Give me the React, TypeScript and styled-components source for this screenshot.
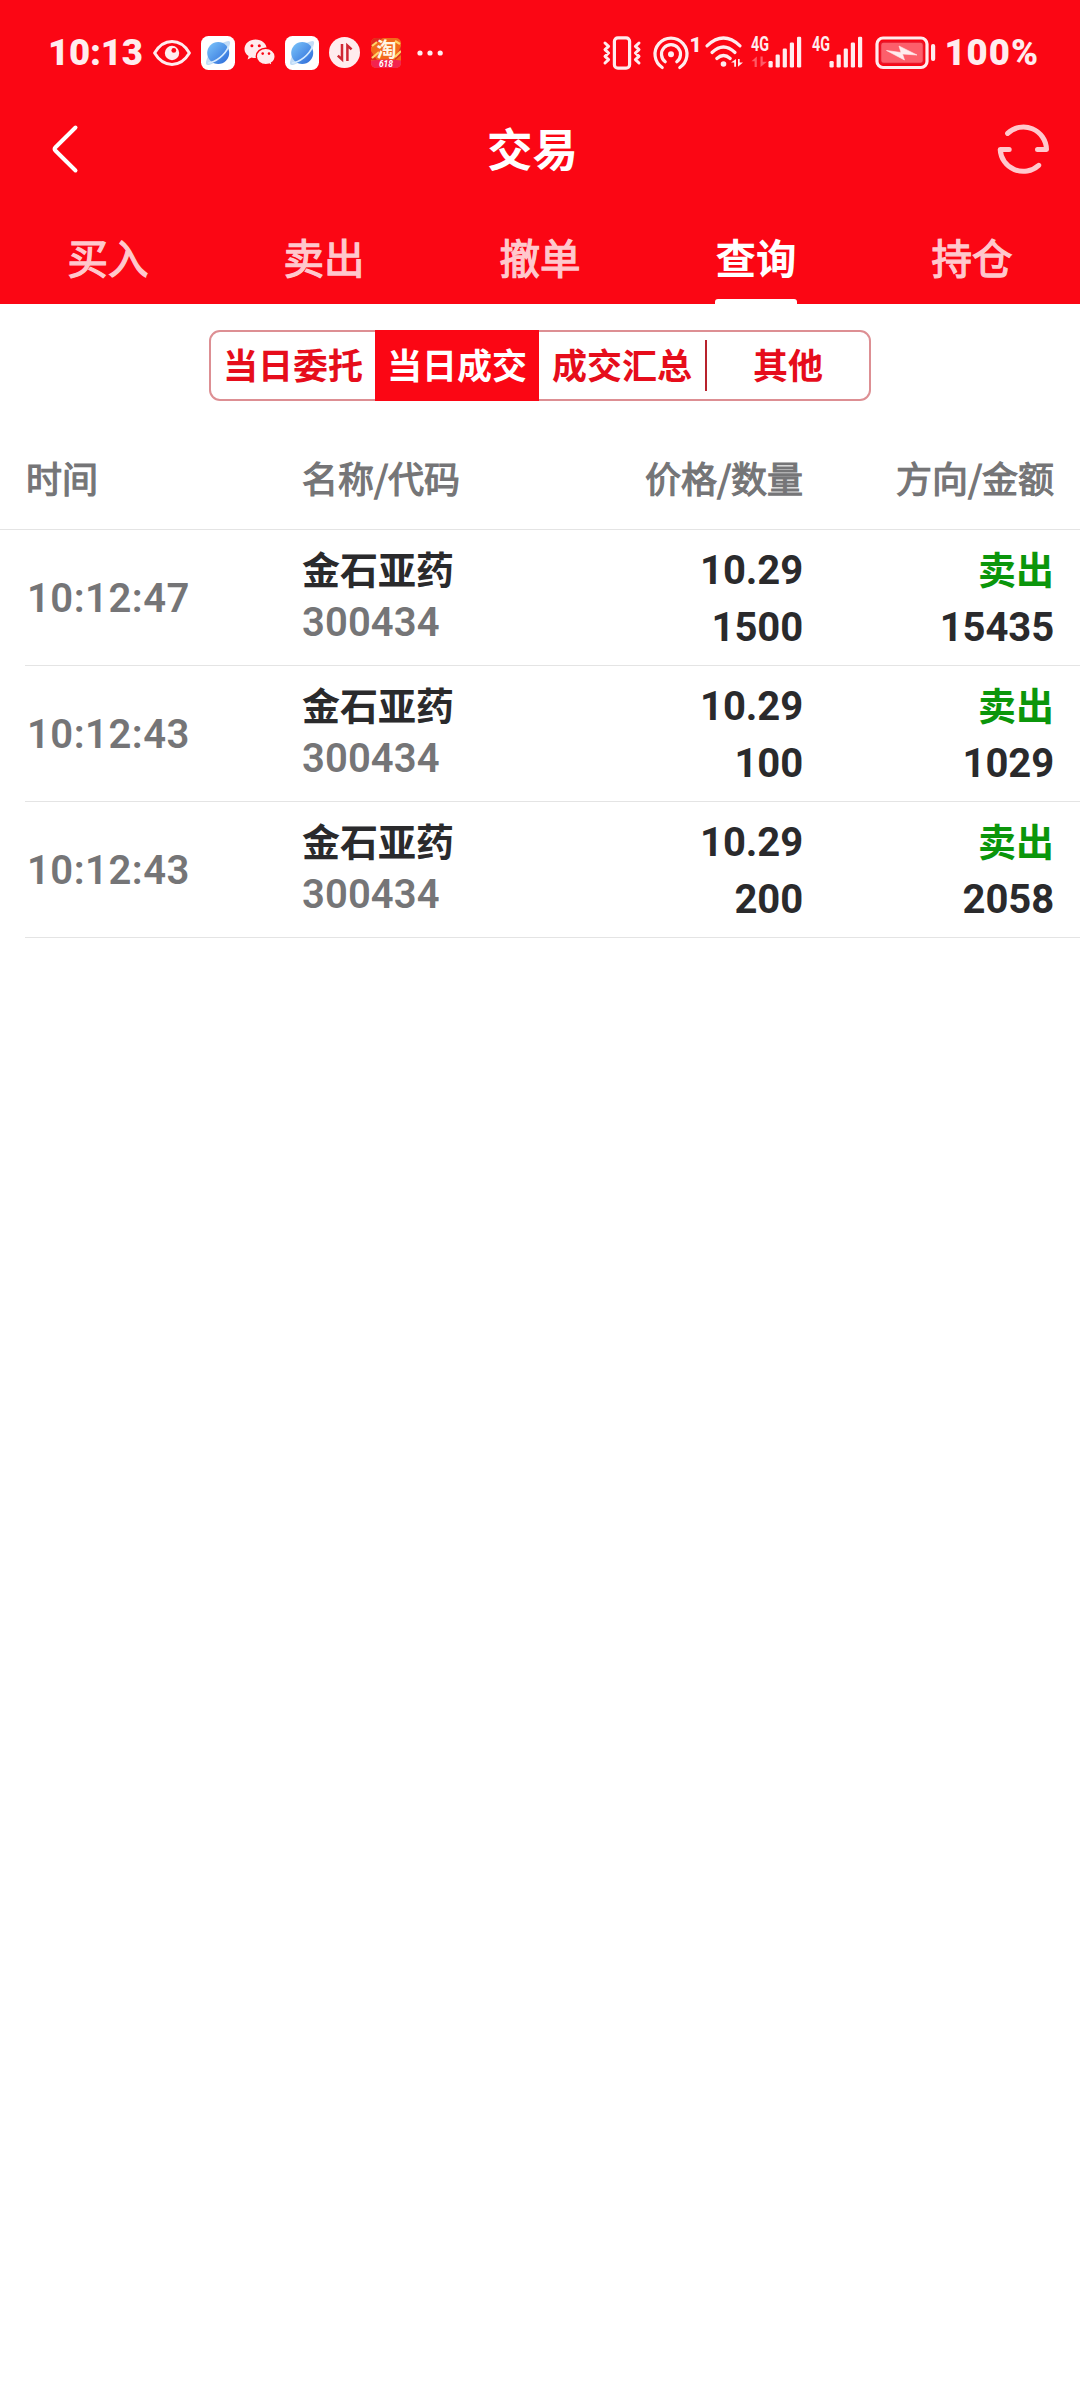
import React from 'react';
import styled, { createGlobalStyle } from 'styled-components';

const CJK = "'Noto Sans CJK SC', sans-serif";
const LATIN = "Roboto, 'Noto Sans CJK SC', sans-serif";
const RED = '#fb0614';
const TINT = '#ffecee';

const GlobalStyle = createGlobalStyle`
  * { box-sizing: border-box; }
  body { margin: 0; background: #fff; font-family: ${CJK}; }
`;

const Screen = styled.div`
  width: 1080px;
  min-height: 2400px;
  background: #fff;
  display: flex;
  flex-direction: column;
`;

const Header = styled.header`
  background: ${RED};
  height: 304px;
  display: flex;
  flex-direction: column;
`;

const StatusBar = styled.div`
  height: 104px;
  padding: 0 41px 0 48px;
  display: flex;
  justify-content: space-between;
  color: ${TINT};
`;

const StatusGroup = styled.div`
  display: flex;
  align-items: center;
  height: 105px;
`;

const StatusText = styled.span<{ $spacing: number; $gap?: number }>`
  font: 900 36.5px/40px ${LATIN};
  letter-spacing: ${(p) => p.$spacing}px;
  margin-left: ${(p) => p.$gap ?? 0}px;
`;

const Glyph = styled.svg<{ $gap: number }>`
  display: block;
  flex: none;
  overflow: visible;
  margin-left: ${(p) => p.$gap}px;
`;

const NavBar = styled.div`
  height: 89px;
  padding: 0 29px 0 50px;
  display: grid;
  grid-template-columns: 120px 1fr 120px;
  align-items: center;
`;

const Title = styled.h1`
  margin: 0 0 4px;
  font: 700 45.5px/60px ${CJK};
  color: #fff;
  text-align: center;
  padding-right: 36px;
`;

const IconButton = styled.button<{ $end?: boolean }>`
  border: 0;
  padding: 0;
  background: none;
  display: flex;
  justify-content: ${(p) => (p.$end ? 'flex-end' : 'flex-start')};
`;

const Tabs = styled.nav`
  height: 111px;
  display: grid;
  grid-template-columns: repeat(5, 1fr);
`;

const Tab = styled.div<{ $active?: boolean }>`
  display: flex;
  flex-direction: column;
  align-items: center;
  justify-content: space-between;
  padding-top: 31px;
  font: ${(p) => (p.$active ? 700 : 400)} 40.5px/66px ${CJK};
  -webkit-text-stroke: ${(p) => (p.$active ? '0' : '1.3px #ffc8cd')};
  color: ${(p) => (p.$active ? '#fff' : '#ffc8cd')};
`;

const Indicator = styled.div`
  width: 82px;
  height: 5px;
  border-radius: 3px 3px 0 0;
  background: #fff;
`;

const Segments = styled.div`
  margin: 26px auto 0;
  width: 662px;
  height: 71px;
  border: 2px solid #dd8f93;
  border-radius: 11px;
  display: grid;
  grid-template-columns: 164px 164px 168px 1fr;
`;

const Segment = styled.div<{ $active?: boolean; $divider?: boolean }>`
  display: flex;
  align-items: center;
  justify-content: center;
  margin: ${(p) => (p.$active ? '-2px 0' : p.$divider ? '8px 0' : '0')};
  background: ${(p) => (p.$active ? RED : 'transparent')};
  border-right: ${(p) => (p.$divider ? '2px solid #b8232d' : '0')};
  font: 700 35px/48px ${CJK};
  color: ${(p) => (p.$active ? '#fff' : '#e60d1b')};
  padding-bottom: 3px;
`;

const columns = '276px 249px 1fr 251px';

const TableHead = styled.div`
  margin-top: 28px;
  height: 101px;
  border-bottom: 1px solid #e4e4e4;
  padding: 22px 26px 0 26px;
  display: grid;
  grid-template-columns: ${columns};
  font: 400 36px/52px ${CJK};
  -webkit-text-stroke: 1.2px #757577;
  color: #757577;
`;

const HeadCell = styled.div<{ $right?: boolean }>`
  text-align: ${(p) => (p.$right ? 'right' : 'left')};
`;

const Row = styled.div`
  margin-left: 25px;
  height: 136px;
  border-bottom: 1px solid #e4e4e4;
  padding: 0 26px 0 1px;
  display: grid;
  grid-template-columns: ${columns};
`;

const Cell = styled.div<{ $right?: boolean }>`
  display: flex;
  flex-direction: column;
  align-items: ${(p) => (p.$right ? 'flex-end' : 'flex-start')};
`;

const Time = styled.span`
  margin: 49px 0 0 1px;
  font: 600 40px/40px ${LATIN};
  letter-spacing: 0.5px;
  color: #757577;
`;

const StockName = styled.span`
  margin-top: 12px;
  font: 700 38px/52px ${CJK};
  color: #2a2a2c;
`;

const Code = styled.span`
  margin-top: 9px;
  font: 600 40px/40px ${LATIN};
  letter-spacing: 0.1px;
  color: #757577;
`;

const Figure = styled.span<{ $top: number }>`
  margin-top: ${(p) => p.$top}px;
  font: 700 40px/40px ${LATIN};
  letter-spacing: -0.1px;
  color: #2a2a2c;
`;

const Side = styled.span`
  margin-top: 12px;
  font: 700 38px/52px ${CJK};
  color: #0b960b;
`;

const Eye = () => (
  <Glyph $gap={10.5} width="38" height="26" viewBox="0 0 38 26" fill="none">
    <path d="M1.6 13C6 5.6 12 1.6 19 1.6S32 5.6 36.4 13C32 20.4 26 24.4 19 24.4S6 20.4 1.6 13Z" stroke={TINT} strokeWidth="3" strokeLinejoin="round" />
    <circle cx="19" cy="13" r="7.2" fill={TINT} />
    <circle cx="20.8" cy="10.4" r="2.4" fill={RED} />
  </Glyph>
);

const Planet = ({ gap, id }: { gap: number; id: string }) => (
  <Glyph $gap={gap} width="34" height="34" viewBox="0 0 34 34">
    <defs>
      <linearGradient id={id} x1="0" y1="0" x2="1" y2="1">
        <stop offset="0" stopColor="#7cc6fb" />
        <stop offset="1" stopColor="#2a68d8" />
      </linearGradient>
    </defs>
    <rect width="34" height="34" rx="7.5" fill="#fff" />
    <path d="M20 7.500Q27.500 4 28.800 5.400T26.500 14ZM7 20Q4 27 5.400 28.600T13.500 26.500Z" fill="#c3dcf6" />
    <circle cx="17.200" cy="17" r="11" fill={`url(#${id})`} />
    <path d="M7 27C14 26.500 24 19.500 27.800 10" fill="none" stroke="#d5ebff" strokeWidth="1.700" />
  </Glyph>
);

const WeChat = () => (
  <Glyph $gap={9.5} width="32" height="28" viewBox="0 0 32 28">
    <path d="M11.600.6C5.400.6.5 4.700.5 9.900c0 3 1.600 5.500 4.100 7.200L3.600 20.400l3.900-2c1.300.4 2.600.6 4.100.6 6.100 0 11-4.100 11-9.200S17.700.6 11.600.6Z" fill={TINT} />
    <path d="M21.800 9.200c-5.300 0-9.500 3.700-9.500 8.200s4.200 8.200 9.500 8.200c1.200 0 2.300-.2 3.400-.5l3.200 1.800-.8-3c2.200-1.500 3.600-3.800 3.600-6.500 0-4.500-4.200-8.200-9.400-8.200Z" fill={TINT} stroke={RED} strokeWidth="1.400" />
    <circle cx="7.900" cy="6.800" r="1.500" fill={RED} />
    <circle cx="15.300" cy="6.800" r="1.500" fill={RED} />
    <circle cx="18.700" cy="14.600" r="1.300" fill={RED} />
    <circle cx="25" cy="14.600" r="1.300" fill={RED} />
  </Glyph>
);

const Transfer = () => (
  <Glyph $gap={9.5} width="31" height="31" viewBox="0 0 31 31">
    <circle cx="15.500" cy="15.500" r="15.500" fill={TINT} />
    <path d="M13 7v15.500L8.800 18.600M18.400 24V8.500l4.200 3.900" fill="none" stroke="#cf2733" strokeWidth="2.500" />
  </Glyph>
);

const Taobao = () => (
  <Glyph $gap={11.5} width="30" height="30" viewBox="0 0 30 30">
    <defs>
      <clipPath id="tb"><rect width="30" height="30" rx="5" /></clipPath>
    </defs>
    <g clipPath="url(#tb)">
      <rect width="30" height="30" fill="#f26a1c" />
      <path d="M0 0h12L0 9ZM30 8v9l-7 6ZM0 13l6 9H0Z" fill="#e02b1e" />
      <path d="M1 8 6 4M24 3l5 3M24 19l6-6M1 20l7-6" stroke="#ffd36a" strokeWidth="2.200" />
      <path d="M0 22.500q15-2 30 0V30H0Z" fill="#f3234f" />
    </g>
    <text x="15.500" y="18.500" textAnchor="middle" fontFamily="Noto Sans CJK SC" fontWeight="700" fontSize="20" fill="#fff6e6">淘</text>
    <text x="15" y="28.800" textAnchor="middle" fontFamily="Roboto" fontWeight="700" fontStyle="italic" fontSize="8.500" fill="#fff">618</text>
  </Glyph>
);

const More = () => (
  <Glyph $gap={15.5} width="27" height="6" viewBox="0 0 27 6" fill={TINT}>
    <circle cx="3" cy="3" r="2.600" />
    <circle cx="13" cy="3" r="2.600" />
    <circle cx="23.200" cy="3" r="2.600" />
  </Glyph>
);

const Vibrate = () => (
  <Glyph $gap={0} width="38" height="34" viewBox="0 0 38 34" fill="none" stroke={TINT} strokeWidth="3" strokeLinejoin="round" strokeLinecap="round">
    <rect x="11.400" y="1.800" width="15.200" height="30.400" rx="3.500" strokeWidth="3.200" />
    <path d="M2 7 5.600 10.300 2 13.600 5.600 17 2 20.300 5.600 23.600 2 27M36 7l-3.600 3.300L36 13.600 32.400 17l3.600 3.300-3.600 3.300L36 27" />
  </Glyph>
);

const Hotspot = () => (
  <Glyph $gap={12} width="47" height="34" viewBox="0 0 47 34" fill="none" stroke={TINT} strokeWidth="3.200" strokeLinecap="round">
    <path d="M9.200 31.500A16 16 0 1 1 26.800 31.500" />
    <path d="M12.200 25.700A9.500 9.500 0 1 1 23.800 25.700" />
    <circle cx="18" cy="18.200" r="3" fill={TINT} stroke="none" />
    <text x="36.500" y="15.500" fontFamily="Roboto" fontWeight="900" fontSize="21" fill={TINT} stroke="none">1</text>
  </Glyph>
);

const Wifi = () => (
  <Glyph $gap={5} width="38" height="34" viewBox="0 0 38 34" fill="none" stroke={TINT} strokeWidth="3.200" strokeLinecap="round">
    <path d="M2 9.800Q18.500-5.800 35 9.800M7 16.500Q18.500 5.500 30 16.500M11.800 22.500Q18.500 16.500 25.200 22.500" />
    <circle cx="18.500" cy="28" r="2.800" fill={TINT} stroke="none" />
    <path d="M31 23v7.800h-1.800v-4.300h-3.200ZM33 30.800V23h1.700v3.600h3.300Z" fill={TINT} stroke="none" />
  </Glyph>
);

const bars = [
  { x: 17.5, y: 25 },
  { x: 24.6, y: 18.5 },
  { x: 31.7, y: 12.5 },
  { x: 38.8, y: 6.5 },
  { x: 46, y: 0.8 },
];

const Signal = ({ gap, data }: { gap: number; data?: boolean }) => (
  <Glyph $gap={gap} width="51" height="34" viewBox="0 0 51 34" fill={TINT}>
    <text x="0" y="14.500" fontFamily="Roboto" fontWeight="700" fontSize="19.500" textLength="18" lengthAdjust="spacingAndGlyphs">4G</text>
    {data && <path d="M5.800 20.500V31H3.600V25.200H.5ZM9.500 31V20.500h2.200V25.800h4.300Z" fill="#fe5a66" />}
    {bars.map((b) => (
      <rect key={b.x} x={b.x} y={b.y} width="4.200" height={31.5 - b.y} rx="1.300" />
    ))}
  </Glyph>
);

const Battery = () => (
  <Glyph $gap={12} width="61" height="34" viewBox="0 0 61 34">
    <rect x="2" y="2" width="50" height="29.500" rx="6" fill="none" stroke={TINT} strokeWidth="3.200" />
    <rect x="5.500" y="6" width="43" height="21.500" rx="3" fill="#fc5f6b" stroke="#e9172a" strokeWidth="1.500" />
    <path d="M11.500 14.500 26 16.500 24 10 42 19 27.500 18l2 6Z" fill={TINT} stroke={TINT} strokeWidth=".6" />
    <rect x="56" y="8" width="4.200" height="17" rx="2" fill={TINT} />
  </Glyph>
);

const BackIcon = () => (
  <svg width="29" height="52" viewBox="0 0 29 52" fill="none" stroke="#fff" strokeWidth="4" strokeLinecap="round" strokeLinejoin="round">
    <path d="M25.500 4.500 5.300 24.500Q3.800 26 5.300 27.500L25.500 47.500" />
  </svg>
);

const RefreshIcon = () => (
  <svg width="56" height="56" viewBox="0 0 56 56" fill="none" stroke="#ffc8cd" strokeWidth="5" strokeLinecap="round" strokeLinejoin="round">
    <path d="M12.600 12.400A23 23 0 0 1 51.500 28.500H42.500" />
    <path d="M43.700 44.300A23 23 0 0 1 5.200 28.500H14.200" />
  </svg>
);

const tabs = ['买入', '卖出', '撤单', '查询', '持仓'];
const segments = ['当日委托', '当日成交', '成交汇总', '其他'];
const trades = [
  { time: '10:12:47', qty: '1500', amount: '15435' },
  { time: '10:12:43', qty: '100', amount: '1029' },
  { time: '10:12:43', qty: '200', amount: '2058' },
];

export default function App() {
  return (
    <>
      <GlobalStyle />
      <Screen>
        <Header>
          <StatusBar>
            <StatusGroup>
              <StatusText $spacing={-0.2}>10:13</StatusText>
              <Eye />
              <Planet gap={9.5} id="planet-a" />
              <WeChat />
              <Planet gap={9} id="planet-b" />
              <Transfer />
              <Taobao />
              <More />
            </StatusGroup>
            <StatusGroup>
              <Vibrate />
              <Hotspot />
              <Wifi />
              <Signal gap={8} data />
              <Signal gap={10} />
              <Battery />
              <StatusText $spacing={1} $gap={8}>100%</StatusText>
            </StatusGroup>
          </StatusBar>
          <NavBar>
            <IconButton aria-label="返回"><BackIcon /></IconButton>
            <Title>交易</Title>
            <IconButton $end aria-label="刷新"><RefreshIcon /></IconButton>
          </NavBar>
          <Tabs>
            {tabs.map((t) => (
              <Tab key={t} $active={t === '查询'}>
                {t}
                {t === '查询' && <Indicator />}
              </Tab>
            ))}
          </Tabs>
        </Header>
        <Segments>
          {segments.map((s, i) => (
            <Segment key={s} $active={i === 1} $divider={i === 2}>{s}</Segment>
          ))}
        </Segments>
        <TableHead>
          <HeadCell>时间</HeadCell>
          <HeadCell>名称/代码</HeadCell>
          <HeadCell $right>价格/数量</HeadCell>
          <HeadCell $right>方向/金额</HeadCell>
        </TableHead>
        {trades.map((t, i) => (
          <Row key={i}>
            <Cell><Time>{t.time}</Time></Cell>
            <Cell>
              <StockName>金石亚药</StockName>
              <Code>300434</Code>
            </Cell>
            <Cell $right>
              <Figure $top={21}>10.29</Figure>
              <Figure $top={17}>{t.qty}</Figure>
            </Cell>
            <Cell $right>
              <Side>卖出</Side>
              <Figure $top={14}>{t.amount}</Figure>
            </Cell>
          </Row>
        ))}
      </Screen>
    </>
  );
}
